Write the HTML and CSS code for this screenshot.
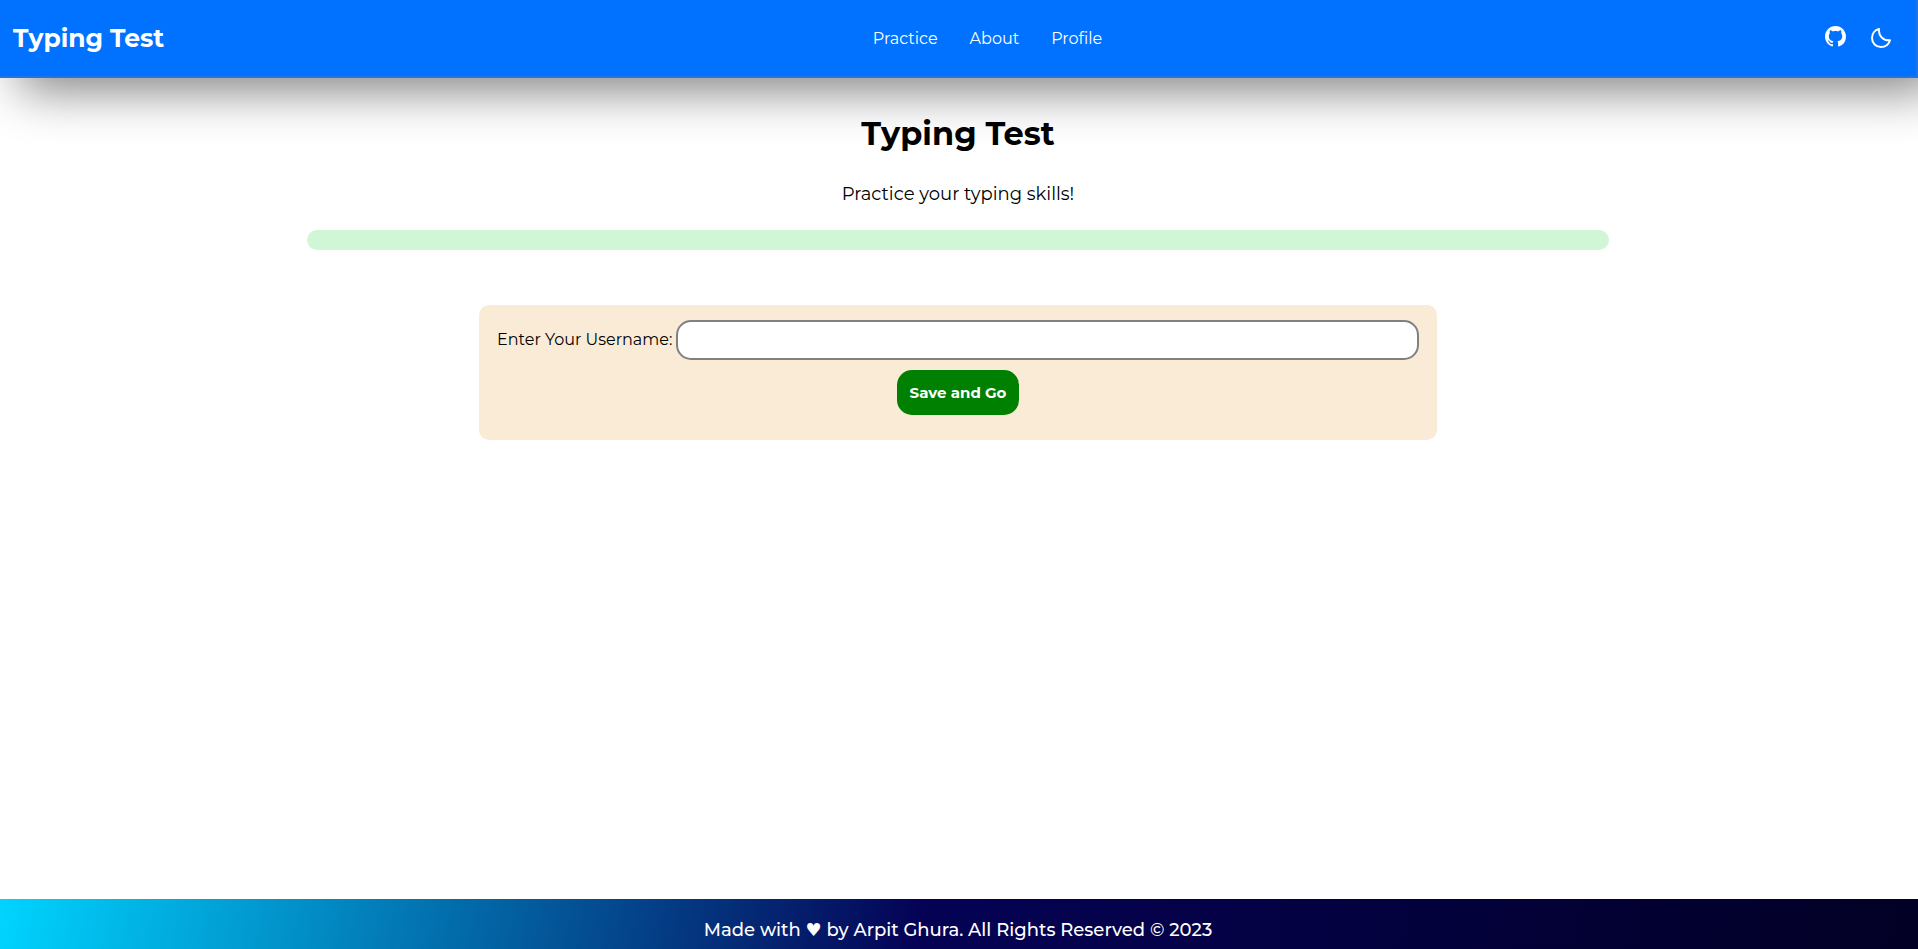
FILE: index.html
```html
<!DOCTYPE html>
<html lang="en">
<head>
<meta charset="utf-8">
<title>Typing Test</title>
<link rel="stylesheet" href="styles.css">
</head>
<body>
<header class="navbar">
  <a class="brand" href="#">Typing Test</a>
  <nav class="links" aria-label="Main">
    <a href="#practice">Practice</a>
    <a href="#about">About</a>
    <a href="#profile">Profile</a>
  </nav>
  <div class="actions">
    <a class="github" href="#github" aria-label="GitHub">
      <svg viewBox="0 0 16 16" width="21" height="21" fill="currentColor" aria-hidden="true"><path d="M8 0C3.58 0 0 3.58 0 8c0 3.54 2.29 6.53 5.47 7.59.4.07.55-.17.55-.38 0-.19-.01-.82-.01-1.49-2.01.37-2.53-.49-2.69-.94-.09-.23-.48-.94-.82-1.13-.28-.15-.68-.52-.01-.53.63-.01 1.08.58 1.23.82.72 1.21 1.87.87 2.33.66.07-.52.28-.87.51-1.07-1.78-.2-3.64-.89-3.64-3.95 0-.87.31-1.59.82-2.15-.08-.2-.36-1.02.08-2.12 0 0 .67-.21 2.2.82.64-.18 1.32-.27 2-.27s1.36.09 2 .27c1.53-1.04 2.2-.82 2.2-.82.44 1.1.16 1.92.08 2.12.51.56.82 1.27.82 2.15 0 3.07-1.87 3.75-3.65 3.95.29.25.54.73.54 1.48 0 1.07-.01 1.93-.01 2.2 0 .21.15.46.55.38A8.01 8.01 0 0 0 16 8c0-4.42-3.58-8-8-8z"/></svg>
    </a>
    <button class="theme" type="button" aria-label="Toggle dark mode">
      <svg viewBox="0 0 20 20" width="20" height="20" fill="none" stroke="currentColor" stroke-width="2" stroke-linejoin="round" aria-hidden="true"><path d="M8 1C7.200 7.500 12 13 19 12.300C17.500 17 14 19 10 19C5 19 1 15.200 1 10C1 5.500 4 2 8 1Z"/></svg>
    </button>
  </div>
</header>
<main class="content">
  <h1 class="title">Typing Test</h1>
  <p class="tagline">Practice your typing skills!</p>
  <div class="strip"></div>
  <form class="card">
    <div class="field">
      <label for="username">Enter Your Username:</label>
      <input id="username" type="text">
    </div>
    <button class="save" type="button">Save and Go</button>
  </form>
</main>
<footer class="footer">Made with <span class="heart">♥</span> by Arpit Ghura. All Rights Reserved © 2023</footer>
</body>
</html>
```
FILE: styles.css
```css
* { box-sizing: border-box; }

body {
  margin: 0;
  min-height: 100vh;
  display: flex;
  flex-direction: column;
  overflow-x: hidden;
  background: #fff;
  color: #000;
  font-family: Montserrat, Inter, "Open Sans", sans-serif;
  font-size: 16px;
  line-height: 20px;
}

a { color: inherit; text-decoration: none; }

.navbar {
  display: flex;
  justify-content: space-between;
  align-items: center;
  height: 78px;
  padding: 0 25px 0 13px;
  border: solid #2374e1;
  border-width: 0 2px 2px 0;
  background: #0072ff;
  color: #fff;
  box-shadow: 20px 12px 50px grey;
}

.brand { font-size: 25px; font-weight: 700; line-height: 32px; }
.links { display: flex; gap: 32px; padding-top: 2px; }
.actions { display: flex; align-items: center; gap: 25px; padding-left: 14px; }
.github { display: flex; padding-bottom: 4px; }
.theme { display: flex; padding: 0; border: 0; background: none; color: inherit; }

.content {
  flex: 1;
  display: flex;
  flex-direction: column;
  align-items: center;
  padding-right: 2px;
}

.title { margin: 34px 0 0; font-size: 32px; font-weight: 700; line-height: 44px; }
.tagline { margin: 26px 0 0; font-size: 18px; line-height: 24px; }
.strip { width: 68%; height: 20px; margin-top: 24px; border-radius: 10px; background: #d1f6d5; }

.card {
  width: 50%;
  min-width: 480px;
  height: 135px;
  margin-top: 55px;
  padding: 15px 18px;
  border-radius: 10px;
  background: #faebd7;
  text-align: center;
}

.field { display: flex; align-items: center; gap: 4px; }
.field input {
  flex: 1;
  min-width: 0;
  height: 40px;
  padding: 0 10px;
  border: 2px solid grey;
  border-radius: 15px;
  background: #fff;
  font: inherit;
}

.save {
  height: 45px;
  margin-top: 10px;
  padding: 0 13px;
  border: 0;
  border-radius: 15px;
  background: #008000;
  color: #fff;
  font-family: inherit;
  font-size: 15px;
  font-weight: 700;
}

.footer {
  height: 50px;
  padding: 18px 2px 0 0;
  background: linear-gradient(100deg, #00d4ff 0%, #050255 48%, #020024 100%);
  color: #fff;
  font-size: 18px;
  font-weight: 500;
  line-height: 26px;
  text-align: center;
}

.heart { font-family: "DejaVu Sans", sans-serif; }
```
